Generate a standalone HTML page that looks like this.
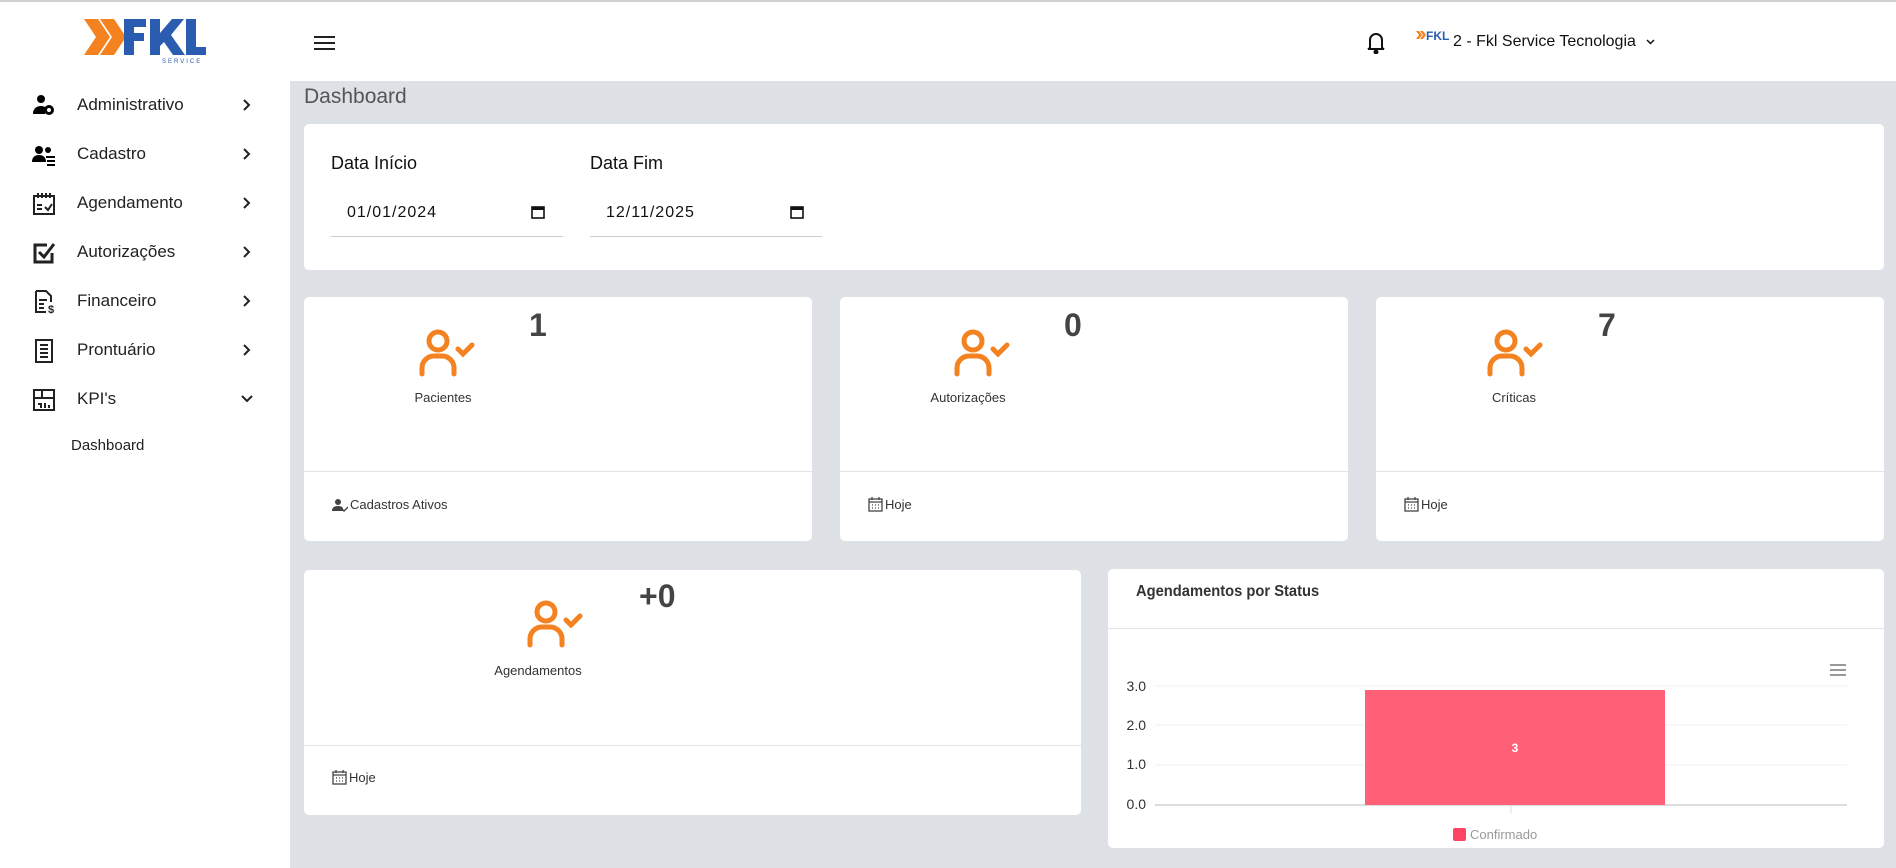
<!DOCTYPE html>
<html><head><meta charset="utf-8"><style>
*{box-sizing:border-box;margin:0;padding:0}
body{width:1896px;height:868px;background:#dee1e5;font-family:"Liberation Sans",sans-serif;position:relative;overflow:hidden;color:#333}
.abs{position:absolute}
#topline{left:0;top:0;width:1896px;height:2px;background:#d0d0d0}
#side{left:0;top:2px;width:290px;height:866px;background:#fff}
#head{left:290px;top:2px;width:1606px;height:79px;background:#fff}
.nav{position:absolute;left:0;width:290px;height:40px;font-size:17px;color:#222}
.nav .ic{position:absolute;left:32px;top:9px;width:24px;height:24px}
.nav .t{position:absolute;left:77px;top:10px}
.nav .ch{position:absolute;left:243px;top:14px}
.card{position:absolute;background:#fff;border-radius:5px}
.num{position:absolute;font-size:32px;font-weight:bold;color:#444}
.lbl{position:absolute;font-size:13px;color:#333;transform:translateX(-50%)}
.sep{position:absolute;left:0;right:0;height:1px;background:#e3e3e3}
.foot{position:absolute;font-size:13px;color:#333;display:flex;align-items:center;gap:2px}
.date{position:absolute;width:232px;height:50px;border-bottom:1px solid #ccc;font-size:16px;letter-spacing:1px;color:#111}
.date span{position:absolute;left:16px;top:17px}
.date svg{position:absolute;right:18px;top:18px}
</style></head><body>
<div id="topline" class="abs"></div>
<div id="side" class="abs">
 <svg class="abs" style="left:82px;top:15px" width="126" height="48" viewBox="0 0 126 48">
  <polygon points="2,2 16,2 28,20 16,38 2,38 14,20" fill="#f58220"/>
  <polygon points="18,2 32,2 44,20 32,38 18,38 30,20" fill="#f58220"/>
  <path d="M42 2h22v8H52v6h10v8H52v14H42z" fill="#2a5db0"/>
  <path d="M68 2h10v14l12-14h12L89 18l14 20H91l-9-13-4 4v9H68z" fill="#2a5db0"/>
  <path d="M104 2h10v28h10v8h-20z" fill="#2a5db0"/>
  <text x="80" y="46" font-size="6" fill="#2a5db0" letter-spacing="2" font-family="Liberation Sans">SERVICE</text>
 </svg>
 <div class="nav" style="top:83px"><svg class="ic" viewBox="0 0 24 24"><circle cx="9" cy="5" r="4"/><path d="M1 20c0-6 4-8 8-8 2 0 3 .5 4 1v7z"/><circle cx="17" cy="16" r="5"/><circle cx="17" cy="16" r="2" fill="#fff"/></svg><span class="t">Administrativo</span><svg class="ch" width="8" height="12" viewBox="0 0 8 12"><path d="M1 1l5 5-5 5" fill="none" stroke="#222" stroke-width="2"/></svg></div>
 <div class="nav" style="top:132px"><svg class="ic" viewBox="0 0 24 24"><circle cx="7" cy="7" r="4"/><circle cx="16" cy="7" r="3"/><path d="M0 19c0-5 3-7 7-7s7 2 7 7z"/><path d="M14 13h9v2h-9zM15 17h8v2h-8zM15 21h8v2h-8z"/></svg><span class="t">Cadastro</span><svg class="ch" width="8" height="12" viewBox="0 0 8 12"><path d="M1 1l5 5-5 5" fill="none" stroke="#222" stroke-width="2"/></svg></div>
 <div class="nav" style="top:181px"><svg class="ic" viewBox="0 0 24 24" fill="none" stroke="#222" stroke-width="2"><rect x="2" y="4" width="20" height="18"/><path d="M6 1v5M10 1v5M14 1v5M18 1v5M5 13h5M5 17h5M13 15l3 3 4-6"/></svg><span class="t">Agendamento</span><svg class="ch" width="8" height="12" viewBox="0 0 8 12"><path d="M1 1l5 5-5 5" fill="none" stroke="#222" stroke-width="2"/></svg></div>
 <div class="nav" style="top:230px"><svg class="ic" viewBox="0 0 24 24" fill="none" stroke="#222" stroke-width="3"><path d="M20 12v9H3V4h12"/><path d="M7 11l5 5 10-13"/></svg><span class="t">Autorizações</span><svg class="ch" width="8" height="12" viewBox="0 0 8 12"><path d="M1 1l5 5-5 5" fill="none" stroke="#222" stroke-width="2"/></svg></div>
 <div class="nav" style="top:279px"><svg class="ic" viewBox="0 0 24 24" fill="none" stroke="#222" stroke-width="2"><path d="M4 1h10l5 5v6M4 1v21h10"/><path d="M7 10h8M7 14h5M7 18h5"/><text x="16" y="23" font-size="11" fill="#222" stroke="none" font-weight="bold">$</text></svg><span class="t">Financeiro</span><svg class="ch" width="8" height="12" viewBox="0 0 8 12"><path d="M1 1l5 5-5 5" fill="none" stroke="#222" stroke-width="2"/></svg></div>
 <div class="nav" style="top:328px"><svg class="ic" viewBox="0 0 24 24" fill="none" stroke="#222" stroke-width="2"><rect x="4" y="1" width="16" height="22"/><path d="M8 6h8M8 10h8M8 14h8M8 18h8"/></svg><span class="t">Prontuário</span><svg class="ch" width="8" height="12" viewBox="0 0 8 12"><path d="M1 1l5 5-5 5" fill="none" stroke="#222" stroke-width="2"/></svg></div>
 <div class="nav" style="top:377px"><svg class="ic" viewBox="0 0 24 24" fill="none" stroke="#222" stroke-width="2"><rect x="2" y="2" width="20" height="20"/><path d="M2 10h20M10 2v8M6 16h3v4M13 15v5M17 17v3"/></svg><span class="t">KPI's</span><svg class="ch" style="left:241px;top:16px" width="12" height="8" viewBox="0 0 12 8"><path d="M1 1l5 5 5-5" fill="none" stroke="#222" stroke-width="2"/></svg></div>
 <div class="abs" style="left:71px;top:435px;font-size:15px;color:#222">Dashboard</div>
</div>
<div id="head" class="abs">
 <svg class="abs" style="left:24px;top:33px" width="21" height="16" viewBox="0 0 21 16"><path d="M0 2h21M0 8h21M0 14h21" stroke="#222" stroke-width="2"/></svg>
 <svg class="abs" style="left:1076px;top:28px" width="20" height="24" viewBox="0 0 20 24" fill="none" stroke="#111" stroke-width="2"><path d="M4 18V10a6 6 0 0 1 12 0v8l2 1H2z"/><circle cx="10" cy="22" r="1.5" fill="#111"/></svg>
 <svg class="abs" style="left:1126px;top:27px" width="34" height="18" viewBox="0 0 34 18"><path d="M0 2h3l3 4-3 4H0l3-4zM4 2h3l3 4-3 4H4l3-4z" fill="#f58220"/><text x="10" y="11" font-size="12" font-weight="bold" fill="#2a5db0" font-family="Liberation Sans">FKL</text></svg>
 <div class="abs" style="left:1163px;top:31px;font-size:16px;color:#111">2 - Fkl Service Tecnologia</div>
 <svg class="abs" style="left:1356px;top:37px" width="9" height="6" viewBox="0 0 9 6"><path d="M1 1l3.5 3.5L8 1" fill="none" stroke="#111" stroke-width="1.5"/></svg>
</div>
<div class="abs" style="left:304px;top:85px;font-size:21px;color:#555">Dashboard</div>
<div class="card" style="left:304px;top:124px;width:1580px;height:146px">
 <div class="abs" style="left:27px;top:29px;font-size:18px;color:#111">Data Início</div>
 <div class="abs" style="left:286px;top:29px;font-size:18px;color:#111">Data Fim</div>
 <div class="date" style="left:27px;top:63px"><span>01/01/2024</span><svg width="14" height="14" viewBox="0 0 14 14"><rect x="1" y="2" width="12" height="11" fill="none" stroke="#111" stroke-width="1.6"/><rect x="1" y="2" width="12" height="3" fill="#111"/></svg></div>
 <div class="date" style="left:286px;top:63px"><span>12/11/2025</span><svg width="14" height="14" viewBox="0 0 14 14"><rect x="1" y="2" width="12" height="11" fill="none" stroke="#111" stroke-width="1.6"/><rect x="1" y="2" width="12" height="3" fill="#111"/></svg></div>
</div>
<svg width="0" height="0" style="position:absolute"><defs><g id="uc" fill="none" stroke="#f58220" stroke-width="5" stroke-linecap="round"><circle cx="20" cy="12" r="9"/><path d="M4 45v-6a12 12 0 0 1 12-12h8a12 12 0 0 1 12 12v6"/><path d="M40 20l5 5 9-9"/></g></defs></svg>
<div class="card" style="left:304px;top:297px;width:508px;height:244px">
 <svg class="abs" style="left:114px;top:32px" width="58" height="50"><use href="#uc"/></svg>
 <div class="num" style="left:225px;top:10px">1</div>
 <div class="lbl" style="left:139px;top:93px">Pacientes</div>
 <div class="sep" style="top:174px"></div>
 <div class="foot" style="left:28px;top:200px"><svg width="16" height="14" viewBox="0 0 16 14"><circle cx="6" cy="4" r="3" fill="#444"/><path d="M0 13c0-4 3-5 6-5s5 1 5 3v2z" fill="#444"/><path d="M10 11l2 2 4-4" stroke="#444" stroke-width="1.4" fill="none"/></svg>Cadastros Ativos</div>
</div>
<div class="card" style="left:840px;top:297px;width:508px;height:244px">
 <svg class="abs" style="left:113px;top:32px" width="58" height="50"><use href="#uc"/></svg>
 <div class="num" style="left:224px;top:10px">0</div>
 <div class="lbl" style="left:128px;top:93px">Autorizações</div>
 <div class="sep" style="top:174px"></div>
 <div class="foot" style="left:28px;top:200px"><svg width="15" height="15" viewBox="0 0 15 15" fill="none" stroke="#444" stroke-width="1.3"><rect x="1" y="2" width="13" height="12"/><path d="M1 5h13M4 0v3M11 0v3M4 8h1M7 8h1M10 8h1M4 11h1M7 11h1M10 11h1"/></svg>Hoje</div>
</div>
<div class="card" style="left:1376px;top:297px;width:508px;height:244px">
 <svg class="abs" style="left:110px;top:32px" width="58" height="50"><use href="#uc"/></svg>
 <div class="num" style="left:222px;top:10px">7</div>
 <div class="lbl" style="left:138px;top:93px">Críticas</div>
 <div class="sep" style="top:174px"></div>
 <div class="foot" style="left:28px;top:200px"><svg width="15" height="15" viewBox="0 0 15 15" fill="none" stroke="#444" stroke-width="1.3"><rect x="1" y="2" width="13" height="12"/><path d="M1 5h13M4 0v3M11 0v3M4 8h1M7 8h1M10 8h1M4 11h1M7 11h1M10 11h1"/></svg>Hoje</div>
</div>
<div class="card" style="left:304px;top:570px;width:777px;height:245px">
 <svg class="abs" style="left:222px;top:30px" width="58" height="50"><use href="#uc"/></svg>
 <div class="num" style="left:335px;top:8px">+0</div>
 <div class="lbl" style="left:234px;top:93px">Agendamentos</div>
 <div class="sep" style="top:175px"></div>
 <div class="foot" style="left:28px;top:200px"><svg width="15" height="15" viewBox="0 0 15 15" fill="none" stroke="#444" stroke-width="1.3"><rect x="1" y="2" width="13" height="12"/><path d="M1 5h13M4 0v3M11 0v3M4 8h1M7 8h1M10 8h1M4 11h1M7 11h1M10 11h1"/></svg>Hoje</div>
</div>
<div class="card" style="left:1108px;top:569px;width:776px;height:279px">
 <div class="abs" style="left:28px;top:14px;font-size:16px;color:#333;font-weight:bold;transform:scaleX(0.92);transform-origin:left">Agendamentos por Status</div>
 <div class="sep" style="top:59px"></div>
 <svg class="abs" style="left:0;top:0" width="776" height="279">
  <g stroke="#999" stroke-width="2"><path d="M722 96h16M722 101h16M722 106h16"/></g>
  <g stroke="#f0f0f0"><path d="M47 117h692M47 156h692M47 196h692"/></g>
  <path d="M47 236h692" stroke="#ddd" stroke-width="2"/>
  <path d="M403 237v7" stroke="#ddd"/>
  <rect x="257" y="121" width="300" height="115" fill="#ff6078"/>
  <text x="407" y="183" font-size="12" font-weight="bold" fill="#fff" text-anchor="middle" font-family="Liberation Sans">3</text>
  <g font-size="14" fill="#333" text-anchor="end" font-family="Liberation Sans"><text x="38" y="122">3.0</text><text x="38" y="161">2.0</text><text x="38" y="200">1.0</text><text x="38" y="240">0.0</text></g>
  <rect x="345" y="259" width="13" height="13" rx="2" fill="#ff4563"/>
  <text x="362" y="270" font-size="13" fill="#999" font-family="Liberation Sans">Confirmado</text>
 </svg>
</div>
</body></html>
